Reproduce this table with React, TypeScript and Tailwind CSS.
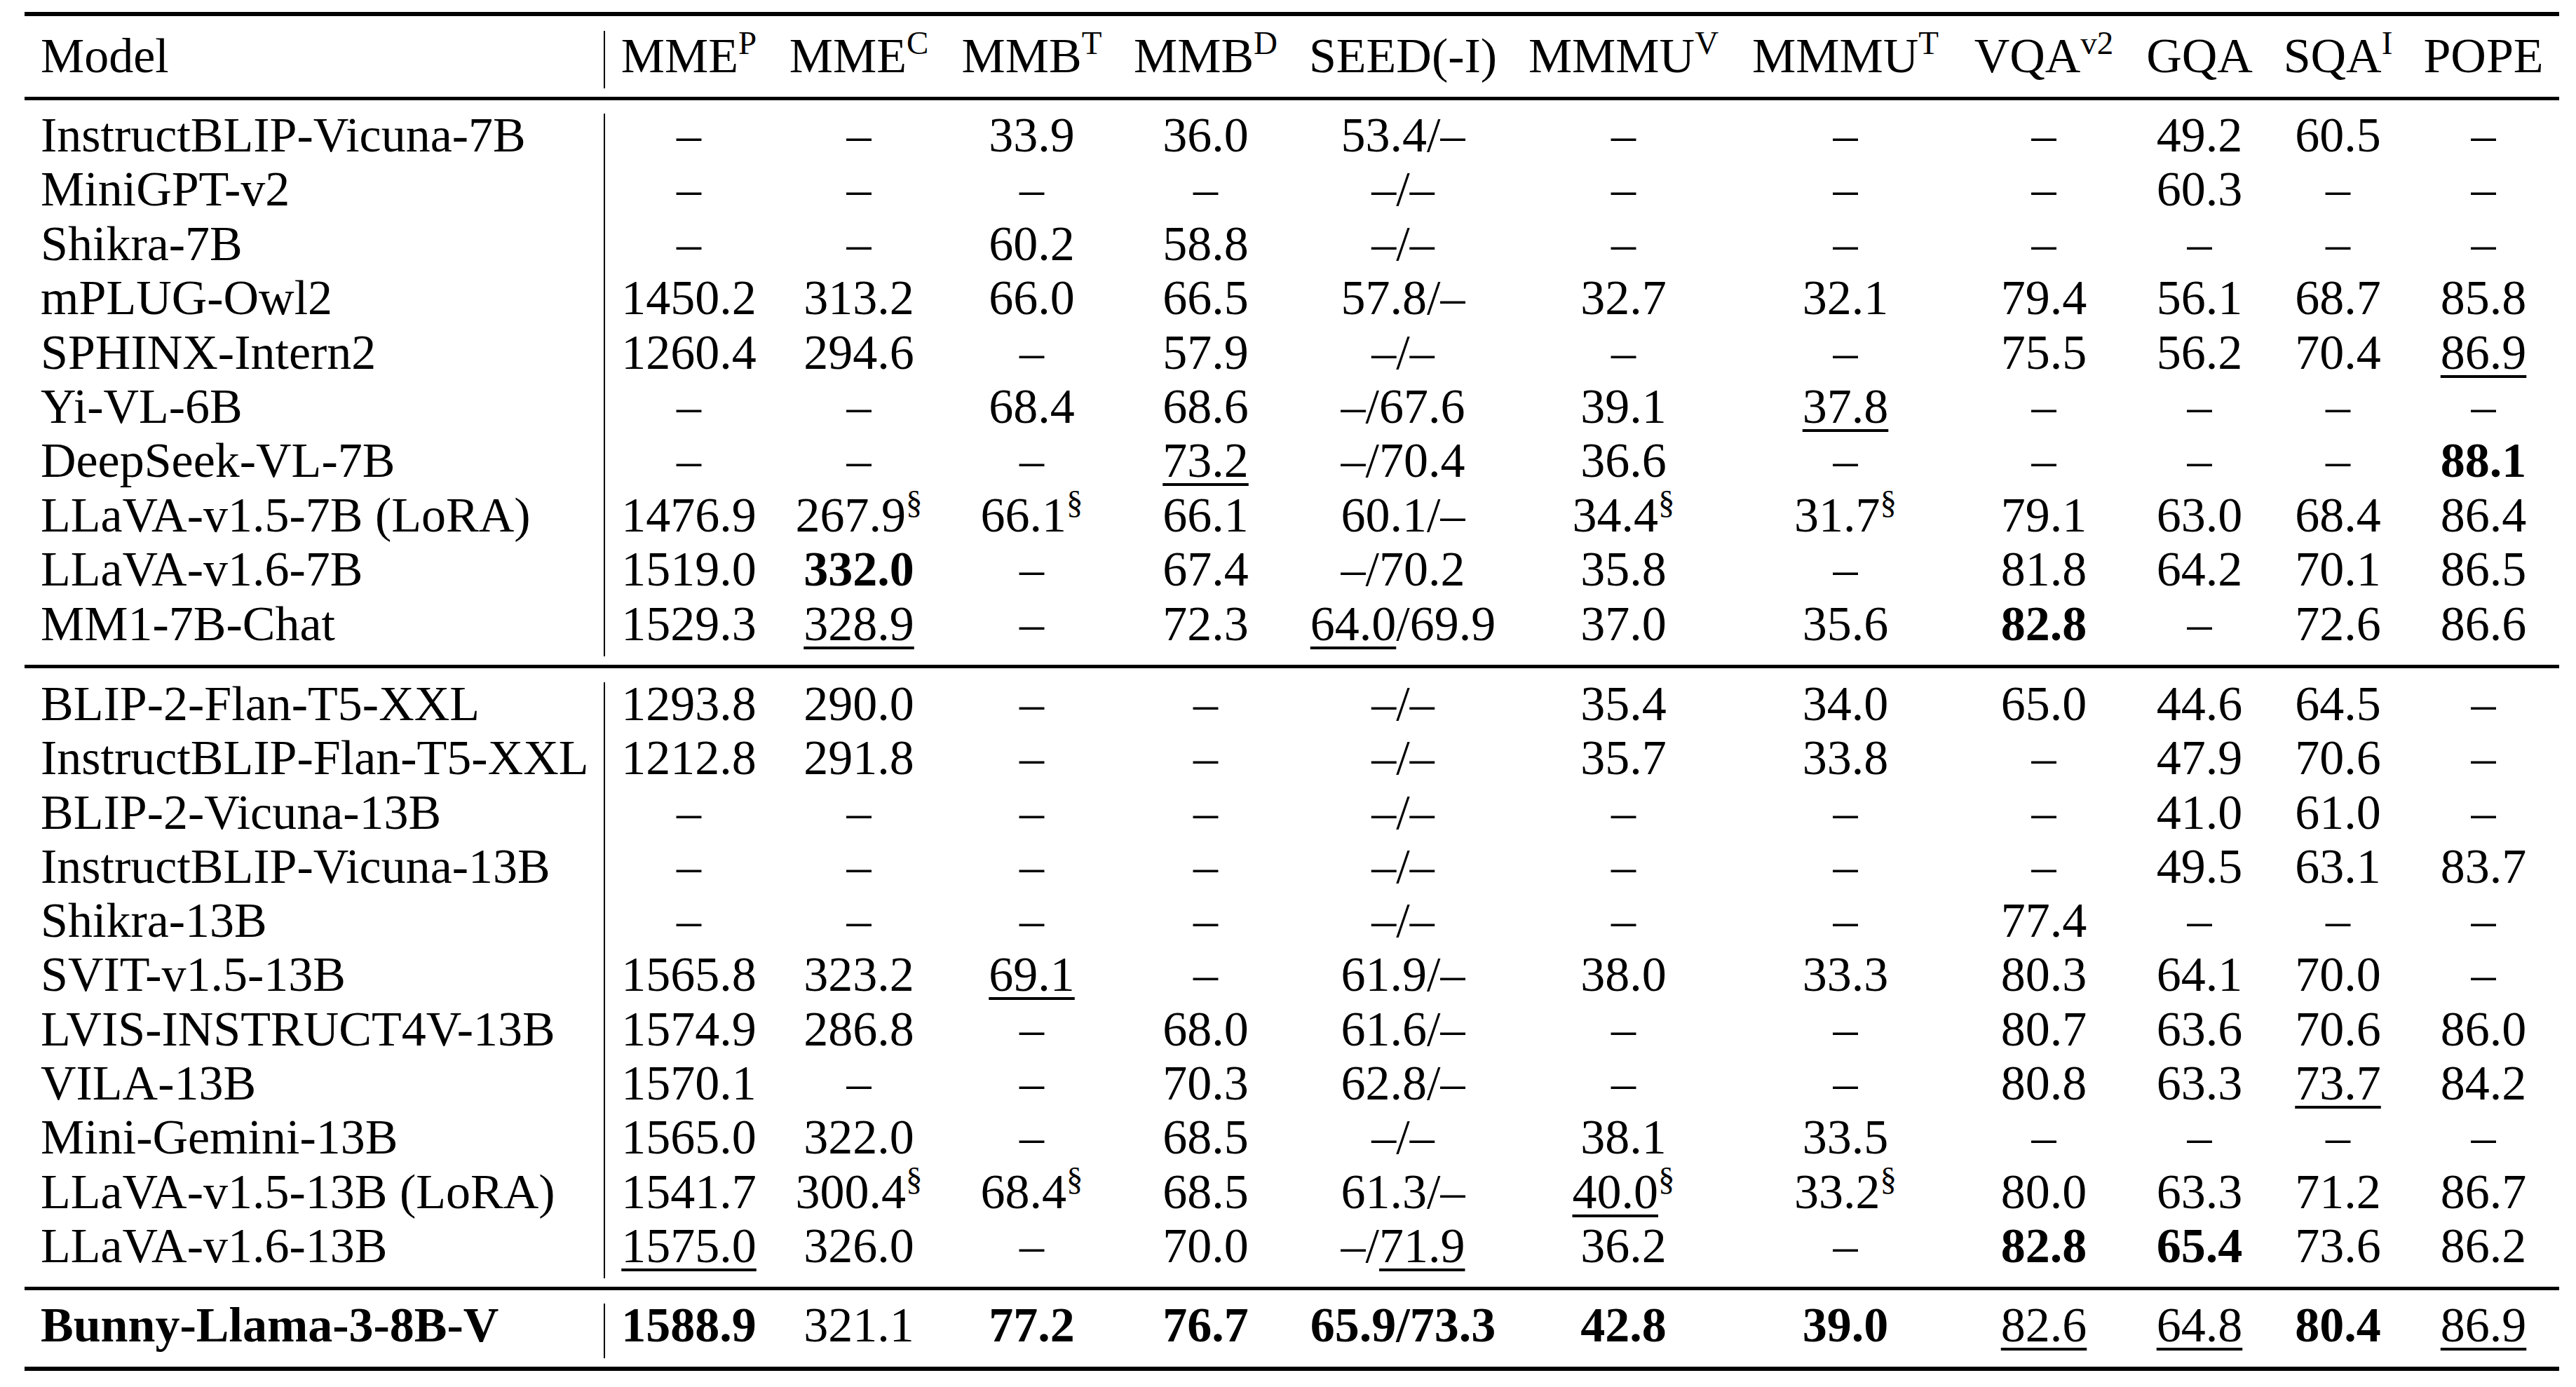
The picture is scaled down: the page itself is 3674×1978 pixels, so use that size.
import React from 'react'

// column widths of the eleven score columns (after the model column)
const colW = [
  'w-[239px]',
  'w-[246px]',
  'w-[247px]',
  'w-[249px]',
  'w-[314px]',
  'w-[315px]',
  'w-[318px]',
  'w-[248px]',
  'w-[196px]',
  'w-[199px]',
  'w-[216px]',
]

const headers: [string, string][] = [
  ['MME', 'P'],
  ['MME', 'C'],
  ['MMB', 'T'],
  ['MMB', 'D'],
  ['SEED(-I)', ''],
  ['MMMU', 'V'],
  ['MMMU', 'T'],
  ['VQA', 'v2'],
  ['GQA', ''],
  ['SQA', 'I'],
  ['POPE', ''],
]

// ** = bold, _ = underline, § = footnote mark
const block1: string[][] = [
  ['InstructBLIP-Vicuna-7B', '–', '–', '33.9', '36.0', '53.4/–', '–', '–', '–', '49.2', '60.5', '–'],
  ['MiniGPT-v2', '–', '–', '–', '–', '–/–', '–', '–', '–', '60.3', '–', '–'],
  ['Shikra-7B', '–', '–', '60.2', '58.8', '–/–', '–', '–', '–', '–', '–', '–'],
  ['mPLUG-Owl2', '1450.2', '313.2', '66.0', '66.5', '57.8/–', '32.7', '32.1', '79.4', '56.1', '68.7', '85.8'],
  ['SPHINX-Intern2', '1260.4', '294.6', '–', '57.9', '–/–', '–', '–', '75.5', '56.2', '70.4', '_86.9_'],
  ['Yi-VL-6B', '–', '–', '68.4', '68.6', '–/67.6', '39.1', '_37.8_', '–', '–', '–', '–'],
  ['DeepSeek-VL-7B', '–', '–', '–', '_73.2_', '–/70.4', '36.6', '–', '–', '–', '–', '**88.1**'],
  ['LLaVA-v1.5-7B (LoRA)', '1476.9', '267.9§', '66.1§', '66.1', '60.1/–', '34.4§', '31.7§', '79.1', '63.0', '68.4', '86.4'],
  ['LLaVA-v1.6-7B', '1519.0', '**332.0**', '–', '67.4', '–/70.2', '35.8', '–', '81.8', '64.2', '70.1', '86.5'],
  ['MM1-7B-Chat', '1529.3', '_328.9_', '–', '72.3', '_64.0_/69.9', '37.0', '35.6', '**82.8**', '–', '72.6', '86.6'],
]

const block2: string[][] = [
  ['BLIP-2-Flan-T5-XXL', '1293.8', '290.0', '–', '–', '–/–', '35.4', '34.0', '65.0', '44.6', '64.5', '–'],
  ['InstructBLIP-Flan-T5-XXL', '1212.8', '291.8', '–', '–', '–/–', '35.7', '33.8', '–', '47.9', '70.6', '–'],
  ['BLIP-2-Vicuna-13B', '–', '–', '–', '–', '–/–', '–', '–', '–', '41.0', '61.0', '–'],
  ['InstructBLIP-Vicuna-13B', '–', '–', '–', '–', '–/–', '–', '–', '–', '49.5', '63.1', '83.7'],
  ['Shikra-13B', '–', '–', '–', '–', '–/–', '–', '–', '77.4', '–', '–', '–'],
  ['SVIT-v1.5-13B', '1565.8', '323.2', '_69.1_', '–', '61.9/–', '38.0', '33.3', '80.3', '64.1', '70.0', '–'],
  ['LVIS-INSTRUCT4V-13B', '1574.9', '286.8', '–', '68.0', '61.6/–', '–', '–', '80.7', '63.6', '70.6', '86.0'],
  ['VILA-13B', '1570.1', '–', '–', '70.3', '62.8/–', '–', '–', '80.8', '63.3', '_73.7_', '84.2'],
  ['Mini-Gemini-13B', '1565.0', '322.0', '–', '68.5', '–/–', '38.1', '33.5', '–', '–', '–', '–'],
  ['LLaVA-v1.5-13B (LoRA)', '1541.7', '300.4§', '68.4§', '68.5', '61.3/–', '_40.0_§', '33.2§', '80.0', '63.3', '71.2', '86.7'],
  ['LLaVA-v1.6-13B', '_1575.0_', '326.0', '–', '70.0', '–/_71.9_', '36.2', '–', '**82.8**', '**65.4**', '73.6', '86.2'],
]

const ours: string[] = [
  '**Bunny-Llama-3-8B-V**', '**1588.9**', '321.1', '**77.2**', '**76.7**', '**65.9/73.3**', '**42.8**', '**39.0**', '_82.6_', '_64.8_', '**80.4**', '_86.9_',
]

function Val({ v }: { v: string }) {
  const parts = v.split(/(\*\*[^*]+\*\*|_[^_]+_|§)/).filter(Boolean)
  return (
    <>
      {parts.map((p, i) => {
        if (p === '§')
          return (
            <sup key={i} className="text-[47px] -top-[26px]">
              §
            </sup>
          )
        if (p.startsWith('**'))
          return (
            <b key={i} className="font-bold">
              {p.slice(2, -2)}
            </b>
          )
        if (p.startsWith('_'))
          return (
            <span key={i} className="underline decoration-[4px] underline-offset-[9px]">
              {p.slice(1, -1)}
            </span>
          )
        return <span key={i}>{p}</span>
      })}
    </>
  )
}

function Row({ cells, h }: { cells: string[]; h: string }) {
  return (
    <div className={`flex leading-[61px] ${h}`}>
      <div className="w-[828px] shrink-0 pl-[23px] border-r-2 border-black whitespace-nowrap">
        <Val v={cells[0]} />
      </div>
      {cells.slice(1).map((c, i) => (
        <div key={i} className={`${colW[i]} shrink-0 text-center whitespace-nowrap`}>
          <Val v={c} />
        </div>
      ))}
    </div>
  )
}

export default function App() {
  return (
    <div className="min-h-screen bg-white text-black pt-[17px] pl-[35px] font-['Liberation_Serif','Times_New_Roman',serif] text-[70px]">
      <div className="w-[3615px]">
        {/* toprule */}
        <div className="h-[6px] bg-black" />

        {/* header */}
        <div className="mt-[21px] flex h-[82px] leading-[71px]">
          <div className="w-[828px] shrink-0 pl-[23px] border-r-2 border-black">Model</div>
          {headers.map(([t, s], i) => (
            <div key={i} className={`${colW[i]} shrink-0 text-center whitespace-nowrap`}>
              {t}
              {s && <sup className="text-[47px] -top-[26px]">{s}</sup>}
            </div>
          ))}
        </div>

        <div className="mt-[12px] h-[5px] bg-black" />

        <div className="mt-[19px]">
          {block1.map((r, i) => (
            <Row key={i} cells={r} h="h-[77.4px]" />
          ))}
        </div>

        <div className="mt-[12px] h-[5px] bg-black" />

        <div className="mt-[20px]">
          {block2.map((r, i) => (
            <Row key={i} cells={r} h="h-[77.3px]" />
          ))}
        </div>

        <div className="mt-[12px] h-[5px] bg-black" />

        <div className="mt-[19px]">
          <Row cells={ours} h="h-[78px]" />
        </div>

        {/* bottomrule */}
        <div className="mt-[12px] h-[6px] bg-black" />
      </div>
    </div>
  )
}
